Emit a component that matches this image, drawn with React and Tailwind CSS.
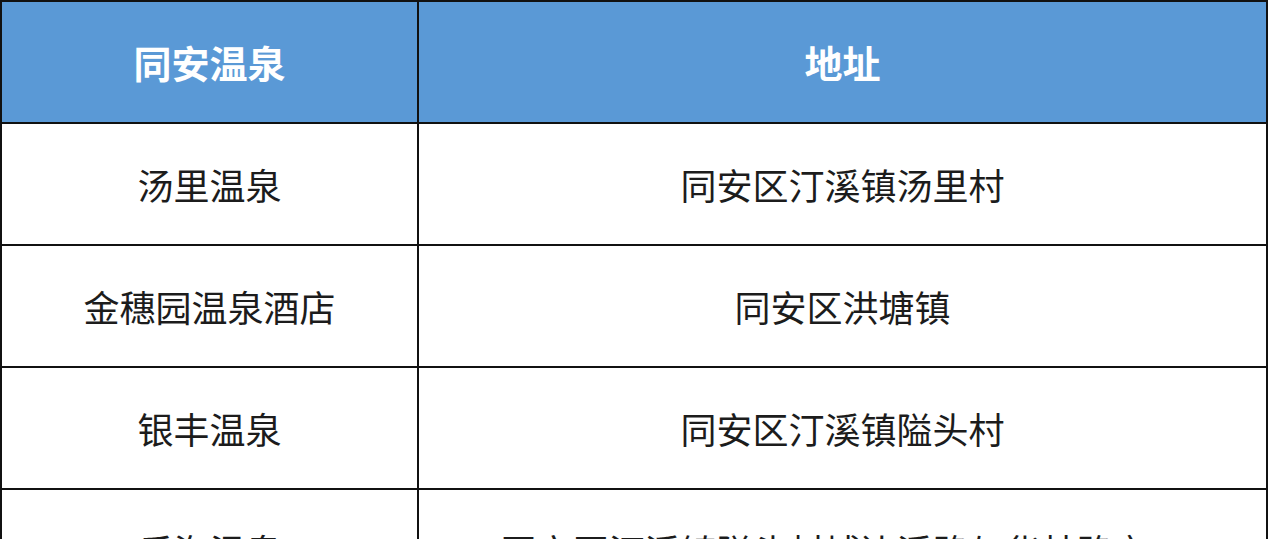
export default function App() {
  const rows = [
    ["汤里温泉", "同安区汀溪镇汤里村"],
    ["金穗园温泉酒店", "同安区洪塘镇"],
    ["银丰温泉", "同安区汀溪镇隘头村"],
    ["乐海温泉", "同安区汀溪镇隘头村埔边溪路与华林路交口"],
  ];
  const font = { fontFamily: '"Noto Sans CJK SC", "Noto Sans", sans-serif' };
  return (
    <div className="w-[1268px] h-[539px] overflow-hidden bg-white" style={font}>
      <div className="w-[1268px] border-t-2 border-l-2 border-[#111]">
        <div className="flex h-[122px] bg-[#5a99d6] border-b-2 border-[#111]">
          <div className="w-[417px] shrink-0 border-r-2 border-[#111] flex items-center justify-center text-white font-bold text-[38px] leading-none">
            同安温泉
          </div>
          <div className="flex-1 border-r-2 border-[#111] flex items-center justify-center text-white font-bold text-[38px] leading-none">
            地址
          </div>
        </div>
        {rows.map((r, i) => (
          <div key={i} className="flex h-[122px] border-b-2 border-[#111]">
            <div className="w-[417px] shrink-0 border-r-2 border-[#111] flex items-center justify-center text-[#1c1c1c] text-[36px] leading-none">
              {r[0]}
            </div>
            <div className="flex-1 border-r-2 border-[#111] flex items-center justify-center text-[#1c1c1c] text-[36px] leading-none">
              {r[1]}
            </div>
          </div>
        ))}
      </div>
    </div>
  );
}
